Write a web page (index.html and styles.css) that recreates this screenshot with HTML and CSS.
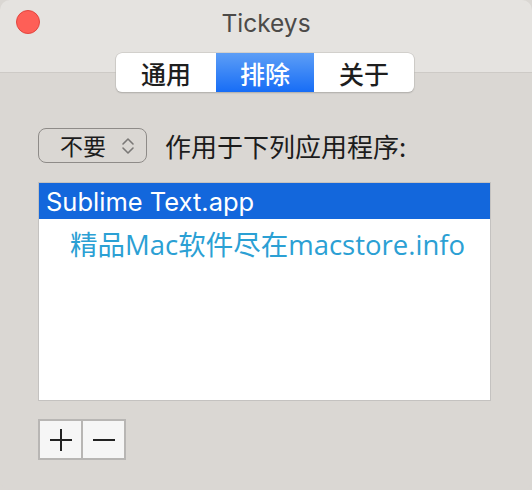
FILE: index.html
```html
<!DOCTYPE html>
<html>
<head>
<meta charset="utf-8">
<link rel="stylesheet" href="styles.css">
</head>
<body>
<div class="window">
  <div class="head">
    <div class="titlebar">
      <span class="close"></span>
      <span class="title">Tickeys</span>
    </div>
    <div class="seg">
      <span class="seg-item">通用</span>
      <span class="seg-item active">排除</span>
      <span class="seg-item">关于</span>
    </div>
  </div>
  <div class="content">
    <div class="row">
      <div class="popup">
        <span class="popup-label">不要</span>
        <svg class="chev" width="16" height="20" viewBox="0 0 16 20"><path d="M3 8 L8 3 L13 8 M3 12 L8 17 L13 12" fill="none" stroke="#7a7876" stroke-width="1.6" stroke-linecap="round" stroke-linejoin="round"/></svg>
      </div>
      <span class="label">作用于下列应用程序:</span>
    </div>
    <div class="list">
      <div class="item selected">Sublime Text.app</div>
      <div class="watermark">精品Mac软件尽在macstore.info</div>
    </div>
    <div class="buttons">
      <span class="btn"><svg width="24" height="24" viewBox="0 0 24 24"><path d="M1 12 H23 M12 1 V23" stroke="#222" stroke-width="2"/></svg></span>
      <span class="btn"><svg width="24" height="24" viewBox="0 0 24 24"><path d="M1 12 H23" stroke="#222" stroke-width="2"/></svg></span>
    </div>
  </div>
</div>
</body>
</html>
```
FILE: styles.css
```css
* { box-sizing: border-box; }
html, body { margin: 0; padding: 0; background: #dad7d3; }
body { width: 532px; height: 490px; overflow: hidden; font-family: "Inter", "Noto Sans CJK SC", sans-serif; }
.window {
  width: 532px; height: 490px;
  background: #dad7d3;
  border-radius: 10px;
  overflow: hidden;
  display: flex; flex-direction: column;
}
.head {
  background: linear-gradient(to bottom, #e5e3e0 0, #e5e3e0 72px, #cdcac6 72px, #cdcac6 73px, #dad7d3 73px);
  display: flex; flex-direction: column; align-items: center;
}
.titlebar {
  width: 100%; height: 53px;
  display: flex; align-items: flex-start; justify-content: center;
  position: relative;
}
.close {
  position: absolute; left: 16px; top: 10px;
  width: 24px; height: 24px; border-radius: 50%;
  background: #fe5f57; border: 1px solid #e2463f;
}
.title {
  margin-top: 8px;
  font-size: 24.5px; color: #4c4a48; font-family: "Inter", sans-serif;
  line-height: 30px;
}
.seg {
  margin-right: 2px;
  display: flex; height: 39px;
  background: #fff;
  border-radius: 6px;
  box-shadow: 0 0 0 0.5px #c0bdba, 0 1px 1.5px rgba(0,0,0,0.25);
  overflow: hidden;
}
.seg-item {
  width: 100px;
  display: flex; align-items: center; justify-content: center;
  font-family: "Noto Sans CJK SC", sans-serif;
  font-size: 25px; color: #1e1e1e; font-weight: 500;
}
.seg-item.active {
  width: 98px;
  background: linear-gradient(to bottom, #5d9ef6, #176df6);
  color: #fff;
}
.content {
  flex: 1;
  padding: 36px 41px 0 38px;
  display: flex; flex-direction: column;
}
.row { display: flex; align-items: center; height: 35px; }
.popup {
  width: 109px; height: 35px;
  border: 1.5px solid #8e8b88; border-radius: 8px;
  display: flex; align-items: center;
  padding-left: 21px;
}
.popup-label {
  font-family: "Noto Sans CJK SC", sans-serif;
  font-size: 23px; color: #1c1c1c; line-height: 1;
}
.chev { margin-left: 14px; }
.label {
  margin-left: 18px;
  font-family: "Noto Sans CJK SC", sans-serif;
  font-size: 26px; color: #1c1c1c; line-height: 1;
}
.list {
  margin-top: 19px;
  height: 219px;
  background: #fff;
  border: 1.5px solid #c4c2c0;
  display: flex; flex-direction: column;
}
.item {
  height: 36px;
  display: flex; align-items: center;
  padding-left: 7px;
  font-size: 25.5px;
  color: #fff;
}
.item.selected { background: #1367dc; }
.watermark {
  margin-top: 9px; padding-left: 31px;
  font-family: "Open Sans", "Noto Sans CJK SC", sans-serif;
  font-size: 27.5px; color: #2ba0d4; line-height: 34px;
}
.buttons { margin-top: 18px; display: flex; }
.btn {
  width: 45px; height: 41px;
  background: #f6f6f6;
  border: 2px solid #b8b6b4;
  display: flex; align-items: center; justify-content: center;
}
.btn + .btn { margin-left: -2px; }
```
